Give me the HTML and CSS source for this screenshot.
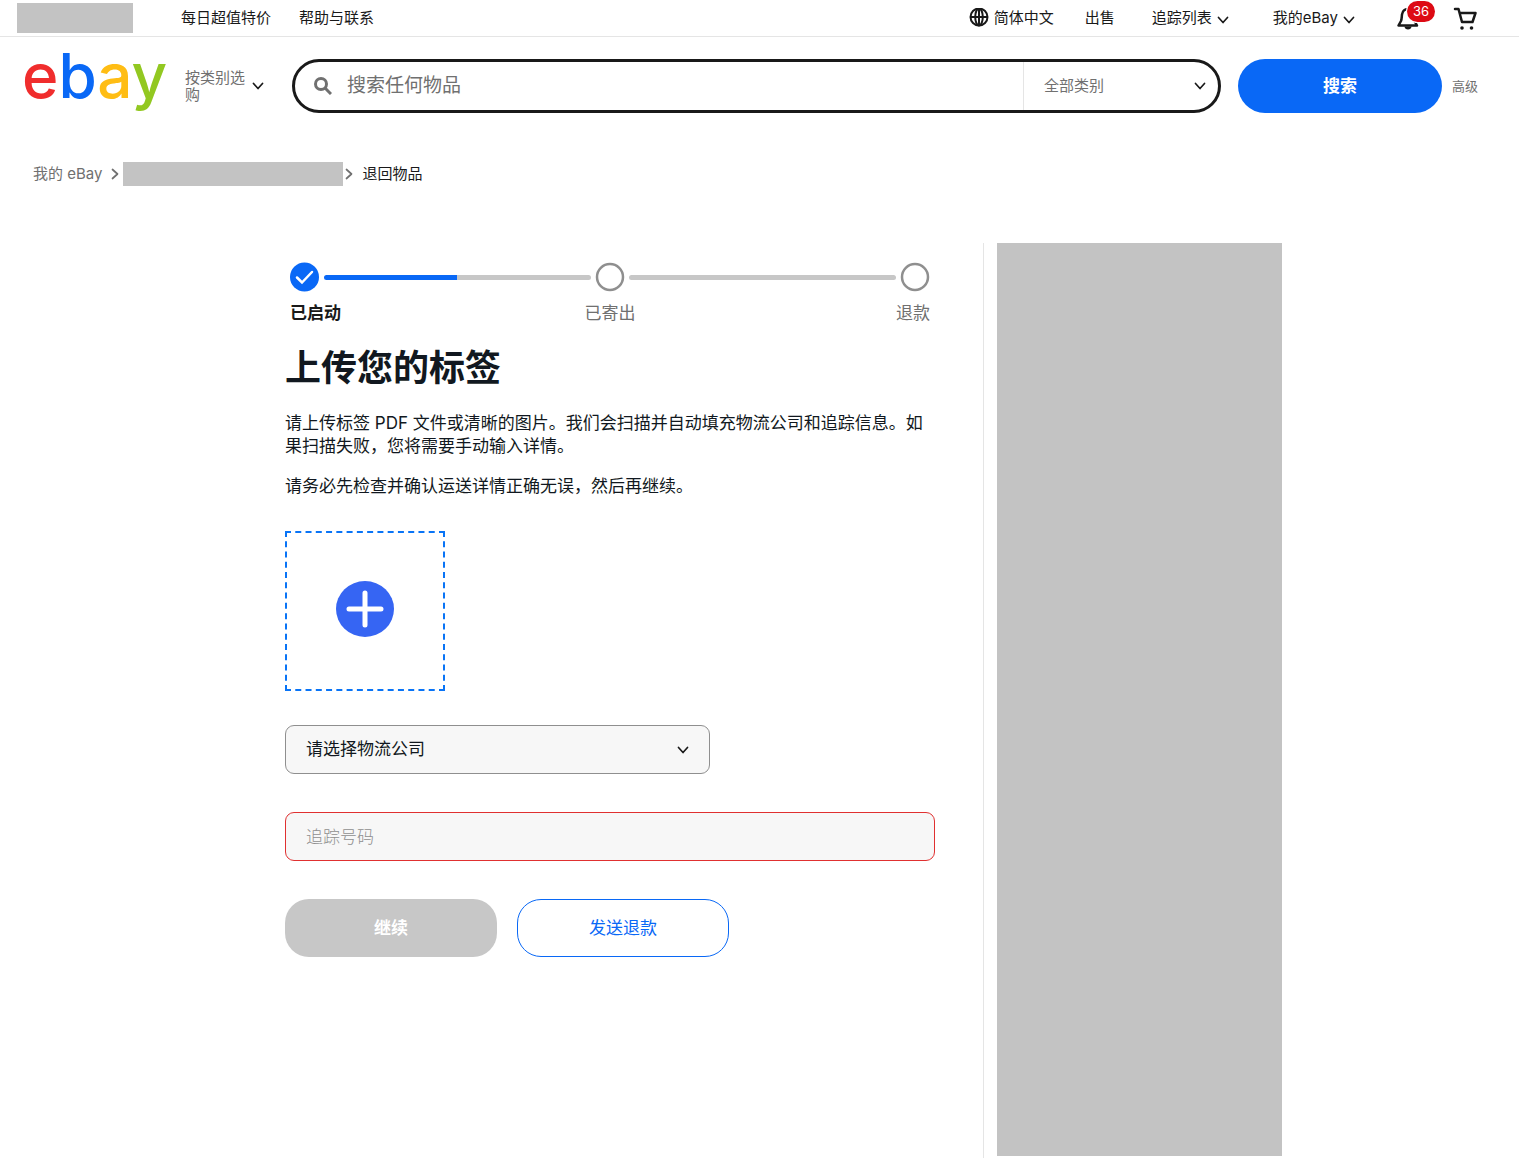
FILE: index.html
```html
<!DOCTYPE html>
<html lang="zh-CN">
<head>
  <meta charset="UTF-8" />
  <meta name="viewport" content="width=device-width, initial-scale=1" />
  <title>上传您的标签 | eBay</title>
  <link rel="stylesheet" href="styles.css">
</head>
<body>

  <!-- Top Navigation Bar -->
  <nav class="top-nav">
    <div class="top-left">
      <span class="greeting"></span>
      <a href="#" class="nav-link">每日超值特价</a>
      <a href="#" class="nav-link">帮助与联系</a>
    </div>
    <div class="top-right">
      <button type="button" class="nav-link language">
        <svg class="globe" viewBox="0 0 20 20" width="20" height="20" aria-hidden="true">
          <circle cx="10" cy="9" r="8.500" />
          <ellipse cx="10" cy="9" rx="3.800" ry="8.500" />
          <path d="M10 1v16M1.500 9h17" />
        </svg>
        简体中文
      </button>
      <a href="#" class="nav-link sell">出售</a>
      <button type="button" class="nav-link watchlist">
        追踪列表
        <svg class="chevron" viewBox="0 0 12 8" width="12" height="8" aria-hidden="true"><path d="M1.500 1.500l4.500 5 4.500-5" /></svg>
      </button>
      <button type="button" class="nav-link my-ebay">
        我的eBay
        <svg class="chevron" viewBox="0 0 12 8" width="12" height="8" aria-hidden="true"><path d="M1.500 1.500l4.500 5 4.500-5" /></svg>
      </button>
      <button type="button" class="icon-button bell" aria-label="通知">
        <svg viewBox="0 0 24 24" width="24" height="24" aria-hidden="true">
          <path d="M12 3c-4 0-5.500 2.500-6 5.500-.3 2-.2 4.500-1 6.500L2.500 19.500h18.500L18.500 15V9c0-3.500-2.500-6-6.500-6z" />
          <path d="M8.500 20.500h7c0 4-7 4-7 0z" class="solid" />
        </svg>
        <span class="badge">36</span>
      </button>
      <a href="#" class="icon-button cart" aria-label="购物车">
        <svg viewBox="0 0 24 24" width="24" height="24" aria-hidden="true">
          <path d="M2 3h3.500l3.500 13h10.500L22.500 7H7" />
          <circle cx="9" cy="22" r="1.800" class="solid" />
          <circle cx="18.500" cy="22" r="1.800" class="solid" />
        </svg>
      </a>
    </div>
  </nav>

  <!-- Logo and search -->
  <header class="header">
    <a href="#" class="logo" aria-label="eBay"><span class="red">e</span><span class="blue">b</span><span class="yellow">a</span><span class="green">y</span></a>
    <button type="button" class="shop-by">
      <span class="shop-text">按类别选购</span>
      <svg class="chevron" viewBox="0 0 12 8" width="12" height="8" aria-hidden="true"><path d="M1.500 1.500l4.500 5 4.500-5" /></svg>
    </button>
    <form class="search">
      <div class="search-box">
        <svg class="search-icon" viewBox="0 0 18 18" width="18" height="18" aria-hidden="true">
          <circle cx="7" cy="7" r="5.500" />
          <path d="M11 11l6 6" />
        </svg>
        <input type="text" class="search-input" placeholder="搜索任何物品" aria-label="搜索任何物品">
        <div class="category">
          <select class="category-select" aria-label="全部类别">
            <option>全部类别</option>
          </select>
          <svg class="chevron" viewBox="0 0 12 8" width="12" height="8" aria-hidden="true"><path d="M1.500 1.500l4.500 5 4.500-5" /></svg>
        </div>
      </div>
      <button type="submit" class="search-button">搜索</button>
      <a href="#" class="advanced">高级</a>
    </form>
  </header>

  <nav class="breadcrumb">
    <a href="#" class="crumb">我的 eBay</a>
    <svg class="arrow" viewBox="0 0 8 12" width="8" height="12" aria-hidden="true"><path d="M1.500 1.500l5 4.500-5 4.500" /></svg>
    <span class="crumb-block"></span>
    <svg class="arrow" viewBox="0 0 8 12" width="8" height="12" aria-hidden="true"><path d="M1.500 1.500l5 4.500-5 4.500" /></svg>
    <span class="crumb current">退回物品</span>
  </nav>

  <div class="container">
    <main class="content">

      <!-- Return progress -->
      <div class="stepper">
        <div class="track">
          <svg class="dot" viewBox="0 0 30 30" width="30" height="30" aria-hidden="true">
            <circle cx="14.500" cy="15" r="14.500" class="dot-done" />
            <path d="M7 15.500l5 5 10-10.500" class="tick" />
          </svg>
          <span class="bar half"></span>
          <svg class="dot" viewBox="0 0 30 30" width="30" height="30" aria-hidden="true"><circle cx="15" cy="15" r="13" class="dot-open" /></svg>
          <span class="bar"></span>
          <svg class="dot" viewBox="0 0 30 30" width="30" height="30" aria-hidden="true"><circle cx="15" cy="15" r="13" class="dot-open" /></svg>
        </div>
        <div class="labels">
          <span class="label active">已启动</span>
          <span class="label">已寄出</span>
          <span class="label">退款</span>
        </div>
      </div>

      <h1>上传您的标签</h1>
      <p>请上传标签 PDF 文件或清晰的图片。我们会扫描并自动填充物流公司和追踪信息。如果扫描失败，您将需要手动输入详情。</p>
      <p>请务必先检查并确认运送详情正确无误，然后再继续。</p>

      <form class="label-form">
        <label class="upload" for="labelFile">
          <svg viewBox="0 0 58 56" width="58" height="56" aria-hidden="true">
            <ellipse cx="29" cy="28" rx="29" ry="28" fill="#3665f3" />
            <path d="M29 12v32M13 28h32" stroke="#fff" stroke-width="5" stroke-linecap="round" />
          </svg>
          <input type="file" id="labelFile" class="file-input" aria-label="上传标签">
        </label>

        <div class="carrier">
          <select class="field carrier-select" aria-label="物流公司">
            <option>请选择物流公司</option>
          </select>
          <svg class="chevron" viewBox="0 0 12 8" width="12" height="8" aria-hidden="true"><path d="M1.500 1.500l4.500 5 4.500-5" /></svg>
        </div>

        <input type="text" class="field tracking" placeholder="追踪号码" aria-label="追踪号码">

        <div class="actions">
          <button type="submit" class="action continue" disabled>继续</button>
          <button type="button" class="action refund">发送退款</button>
        </div>
      </form>
    </main>

    <aside class="sidebar">
      <div class="sidebar-block"></div>
    </aside>
  </div>

</body>
</html>
```
FILE: styles.css
```css
* {
  box-sizing: border-box;
}

body {
  margin: 0;
  background-color: #fff;
  color: #111820;
  font-family: Inter, "Noto Sans CJK SC", sans-serif;
  font-size: 15px;
  line-height: 18px;
}

a {
  color: inherit;
  text-decoration: none;
}

button,
input,
select {
  margin: 0;
  padding: 0;
  border: none;
  background: none;
  color: inherit;
  font: inherit;
}

button {
  cursor: pointer;
}

select {
  appearance: none;
}

svg {
  display: block;
  flex: none;
  fill: none;
}

.chevron,
.arrow {
  stroke: #191919;
  stroke-width: 1.7;
  stroke-linecap: round;
  stroke-linejoin: round;
}

/* Top bar */

.top-nav {
  display: flex;
  justify-content: space-between;
  align-items: center;
  height: 37px;
  padding: 0 42px 0 17px;
  border-bottom: 1px solid #e5e5e5;
  color: #191919;
}

.top-left,
.top-right {
  display: flex;
  align-items: center;
}

.top-left {
  gap: 28px;
}

.greeting {
  width: 116px;
  height: 30px;
  margin-right: 20px;
  background-color: #c3c3c3;
}

.nav-link {
  display: flex;
  align-items: center;
  gap: 5px;
  white-space: nowrap;
}

.globe {
  stroke: #191919;
  stroke-width: 2;
}

.sell {
  margin-left: 31px;
}

.watchlist {
  margin-left: 37px;
}

.my-ebay {
  margin-left: 44px;
}

.nav-link .chevron {
  margin-top: 4px;
}

.icon-button {
  position: relative;
  stroke: #191919;
  stroke-width: 2.5;
  stroke-linejoin: round;
  stroke-linecap: round;
}

.solid {
  fill: #191919;
  stroke: none;
}

.bell {
  margin-left: 41px;
}

.cart {
  margin-left: 33px;
}

.badge {
  position: absolute;
  top: -5px;
  right: -15px;
  width: 28px;
  height: 21px;
  border-radius: 11px;
  background-color: #dd0a14;
  box-shadow: 0 0 0 1px #fff;
  color: #fff;
  font-size: 13px;
  line-height: 21px;
  text-align: center;
}

/* Header */

.header {
  display: flex;
  align-items: center;
  padding: 22px 41px 0 22px;
}

.logo {
  align-self: flex-start;
  width: 163px;
  font-size: 62px;
  font-weight: 500;
  line-height: 34px;
}

.red { color: #f02d2d; }
.blue { color: #0968f6; }
.yellow { color: #ffbd14; }
.green { color: #92c821; }

.shop-by {
  display: flex;
  align-items: center;
  gap: 7px;
  margin-right: 28px;
  color: #707070;
  line-height: 17px;
  text-align: left;
}

.shop-text {
  width: 60px;
}

.search {
  display: flex;
  flex: 1;
  align-items: center;
}

.search-box {
  display: flex;
  flex: 1;
  align-items: center;
  height: 54px;
  padding-left: 19px;
  border: 3px solid #191919;
  border-radius: 27px;
}

.search-icon {
  stroke: #707070;
  stroke-width: 3;
}

.search-input {
  flex: 1;
  min-width: 0;
  margin-left: 15px;
  font-size: 19px;
  line-height: 30px;
  outline: none;
}

.search-input::placeholder {
  color: #707070;
  opacity: 1;
}

.category {
  display: flex;
  align-items: center;
  width: 195px;
  height: 48px;
  padding: 0 12px 0 20px;
  border-left: 1px solid #e5e5e5;
}

.category-select {
  flex: 1;
  color: #707070;
}

.search-button {
  width: 204px;
  height: 54px;
  margin: 0 10px 0 17px;
  border-radius: 27px;
  background-color: #0968f6;
  color: #fff;
  font-size: 17px;
  font-weight: bold;
}

.advanced {
  color: #707070;
  font-size: 13px;
}

/* Breadcrumb */

.breadcrumb {
  display: flex;
  align-items: center;
  height: 24px;
  margin: 49px 33px 57px;
  color: #707070;
}

.crumb:first-child {
  margin-right: 9px;
}

.crumb-block {
  width: 220px;
  height: 24px;
  margin-right: 2px;
  background-color: #c3c3c3;
}

.arrow {
  margin-right: 4px;
  stroke: #707070;
}

.current {
  margin-left: 5px;
  color: #191919;
}

/* Page body */

.container {
  display: flex;
  gap: 48px;
  max-width: 1045px;
  margin: 0 auto;
  padding-left: 48px;
}

.content {
  flex: 1;
  padding-top: 19px;
  font-size: 17px;
  line-height: 23px;
}

.stepper {
  padding: 0 5px;
}

.track {
  display: flex;
  align-items: center;
  gap: 4px;
}

.bar {
  flex: 1;
  height: 5px;
  border-radius: 3px;
  background-color: #c7c7c7;
}

.half {
  background-image: linear-gradient(to right, #0968f6 50%, #c7c7c7 50%);
}

.dot-done {
  fill: #0968f6;
}

.dot-open {
  stroke: #8f8f8f;
  stroke-width: 2.5;
}

.tick {
  stroke: #fff;
  stroke-width: 2.5;
  stroke-linecap: round;
}

.labels {
  display: grid;
  grid-template-columns: repeat(3, 1fr);
  margin-top: 10px;
  color: #707070;
}

.label {
  text-align: center;
}

.label:first-child {
  text-align: left;
}

.label:last-child {
  text-align: right;
}

.active {
  color: #191919;
  font-weight: bold;
}

h1 {
  margin: 19px 0 20px;
  font-size: 36px;
  line-height: 48px;
}

p {
  margin: 0 0 17px;
}

.label-form {
  display: flex;
  flex-direction: column;
  align-items: flex-start;
  margin-top: 33px;
}

.upload {
  display: flex;
  justify-content: center;
  align-items: center;
  width: 160px;
  height: 160px;
  padding-bottom: 4px;
  border: 2px dashed #0974f6;
  cursor: pointer;
}

.file-input {
  position: absolute;
  width: 1px;
  height: 1px;
  opacity: 0;
}

.field {
  width: 100%;
  height: 49px;
  padding: 0 20px;
  border: 1px solid #8f8f8f;
  border-radius: 9px;
  background-color: #f7f7f7;
}

.carrier {
  display: grid;
  align-items: center;
  width: 425px;
  max-width: 100%;
  margin: 34px 0 38px;
}

.carrier > * {
  grid-area: 1 / 1;
}

.carrier .chevron {
  justify-self: end;
  margin-right: 21px;
  pointer-events: none;
}

.tracking {
  border-color: #e03030;
}

.tracking::placeholder {
  color: #8f8f8f;
  font-weight: 200;
  opacity: 1;
}

.actions {
  display: flex;
  gap: 20px;
  margin-top: 38px;
}

.action {
  width: 212px;
  height: 58px;
  border-radius: 24px;
}

.continue {
  background-color: #c7c7c7;
  color: #fff;
  font-weight: bold;
}

.refund {
  border: 1px solid #0968f6;
  color: #0968f6;
}

.sidebar {
  width: 299px;
  padding: 0 0 2px 13px;
  border-left: 1px solid #e5e5e5;
}

.sidebar-block {
  height: 913px;
  background-color: #c3c3c3;
}

@media (max-width: 900px) {
  .container {
    flex-direction: column;
    padding: 0 20px;
  }

  .header {
    flex-wrap: wrap;
  }

  .sidebar {
    width: 100%;
  }
}
```
